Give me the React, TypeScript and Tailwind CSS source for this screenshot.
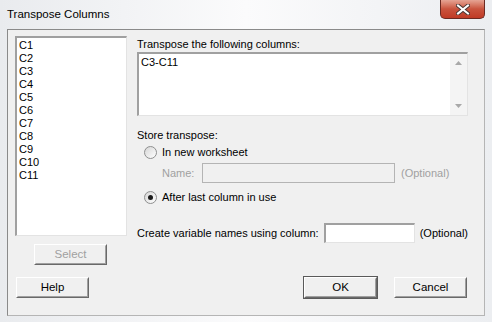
import { ReactNode } from "react";

const font = "font-['Liberation_Sans',Arial,sans-serif]";

function Button({
  children,
  isDefault = false,
  disabled = false,
}: {
  children: ReactNode;
  isDefault?: boolean;
  disabled?: boolean;
}) {
  return (
    <div
      className={`w-[75px] h-[23px] ${
        isDefault ? "border border-[#5a5a5a]" : "border border-transparent"
      }`}
    >
      <div className="w-full h-full border border-t-[#ffffff] border-l-[#ffffff] border-r-[#696969] border-b-[#696969] bg-[#f0f0f0]">
        <div
          className={`w-full h-full border border-t-[#f0f0f0] border-l-[#f0f0f0] border-r-[#a0a0a0] border-b-[#a0a0a0] flex items-center justify-center text-[11.5px] ${
            disabled ? "text-[#a0a0a0]" : "text-black"
          }`}
        >
          {children}
        </div>
      </div>
    </div>
  );
}

function Radio({ checked = false }: { checked?: boolean }) {
  return (
    <div className="w-[13px] h-[13px] rounded-full border border-[#8e8f8f] bg-gradient-to-br from-[#d6d6d6] to-[#ffffff] flex items-center justify-center">
      {checked && <div className="w-[5px] h-[5px] rounded-full bg-[#1a1a1a]" />}
    </div>
  );
}

const columns = ["C1", "C2", "C3", "C4", "C5", "C6", "C7", "C8", "C9", "C10", "C11"];

export default function App() {
  return (
    <div
      className={`w-[492px] h-[322px] overflow-hidden bg-gradient-to-r from-[#e9ebee] via-[#fbfbfc] to-[#eceef1] ${font}`}
    >
      {/* Title bar */}
      <div className="h-[29px] flex items-start justify-between">
        <div className="pl-[7px] pt-[6px] text-[11.5px] text-black leading-[16px]">
          Transpose Columns
        </div>
        <div className="mr-[7px] w-[45px] h-[19px] rounded-b-[5px] border border-t-0 border-[#6b2a22] bg-gradient-to-b from-[#e5a494] via-[#c9533d] to-[#c03a25] flex items-center justify-center">
          <svg width="14" height="11" viewBox="0 0 14 11">
            <path
              d="M2 1.5 L12 9.5 M12 1.5 L2 9.5"
              stroke="#4a3633"
              strokeWidth="4"
              strokeLinecap="square"
            />
            <path
              d="M2 1.5 L12 9.5 M12 1.5 L2 9.5"
              stroke="#ffffff"
              strokeWidth="2"
              strokeLinecap="square"
            />
          </svg>
        </div>
      </div>

      {/* Client area */}
      <div className="ml-[7px] w-[478px] h-[287px] border border-t-[#8a8a8a] border-l-[#8a8a8a] border-r-[#b5b5b5] border-b-[#b5b5b5] bg-[#f0f0f0] pl-[7px] pt-[6px] text-[11px] text-black">
        <div className="flex">
          {/* Left column */}
          <div className="w-[112px] flex flex-col">
            <div className="h-[200px] border-t-2 border-l-2 border-t-[#a0a0a0] border-l-[#a0a0a0] border-r border-b border-r-[#e3e3e3] border-b-[#e3e3e3] bg-white pl-[2px] pt-[1px]">
              {columns.map((c) => (
                <div key={c} className="h-[13px] leading-[13px]">
                  {c}
                </div>
              ))}
            </div>
            <div className="mt-[7px] ml-[18px]">
              <Button disabled>Select</Button>
            </div>
          </div>

          {/* Right column */}
          <div className="ml-[10px] w-[331px] flex flex-col">
            <div className="mt-[1px] h-[14px] leading-[14px]">Transpose the following columns:</div>
            <div className="mt-[1px] h-[64px] flex border-t-2 border-l-2 border-t-[#a0a0a0] border-l-[#a0a0a0] border-r border-b border-r-[#e3e3e3] border-b-[#e3e3e3] bg-white">
              <div className="flex-1 pl-[2px] pt-[2px] leading-[13px]">C3-C11</div>
              <div className="w-[17px] bg-[#f4f4f4] flex flex-col items-center justify-between py-[7px]">
                <svg width="7" height="4" viewBox="0 0 7 4">
                  <path d="M3.5 0 L7 4 L0 4 Z" fill="#a8a8a8" />
                </svg>
                <svg width="7" height="4" viewBox="0 0 7 4">
                  <path d="M0 0 L7 0 L3.5 4 Z" fill="#a8a8a8" />
                </svg>
              </div>
            </div>

            <div className="mt-[12px] h-[14px] leading-[14px]">Store transpose:</div>
            <div className="mt-[2px] ml-[7px] h-[16px] flex items-center gap-[5px]">
              <Radio />
              <span>In new worksheet</span>
            </div>
            <div className="mt-[3px] ml-[25px] h-[20px] flex items-center text-[#a0a0a0]">
              <span className="w-[40px]">Name:</span>
              <div className="w-[193px] h-[20px] border border-[#b4b4b4] bg-[#f0f0f0]" />
              <span className="ml-[6px]">(Optional)</span>
            </div>
            <div className="mt-[6px] ml-[7px] h-[16px] flex items-center gap-[5px]">
              <Radio checked />
              <span>After last column in use</span>
            </div>

            <div className="mt-[18px] h-[20px] flex items-center">
              <span className="w-[188px]">Create variable names using column:</span>
              <div className="w-[91px] h-[20px] border-t-2 border-l-2 border-t-[#a0a0a0] border-l-[#a0a0a0] border-r border-b border-r-[#e3e3e3] border-b-[#e3e3e3] bg-white" />
              <span className="ml-[5px]">(Optional)</span>
            </div>
          </div>
        </div>

        {/* Bottom buttons */}
        <div className="mt-[10px] flex">
          <Button>Help</Button>
          <div className="ml-[213px]">
            <Button isDefault>OK</Button>
          </div>
          <div className="ml-[15px]">
            <Button>Cancel</Button>
          </div>
        </div>
      </div>
    </div>
  );
}
